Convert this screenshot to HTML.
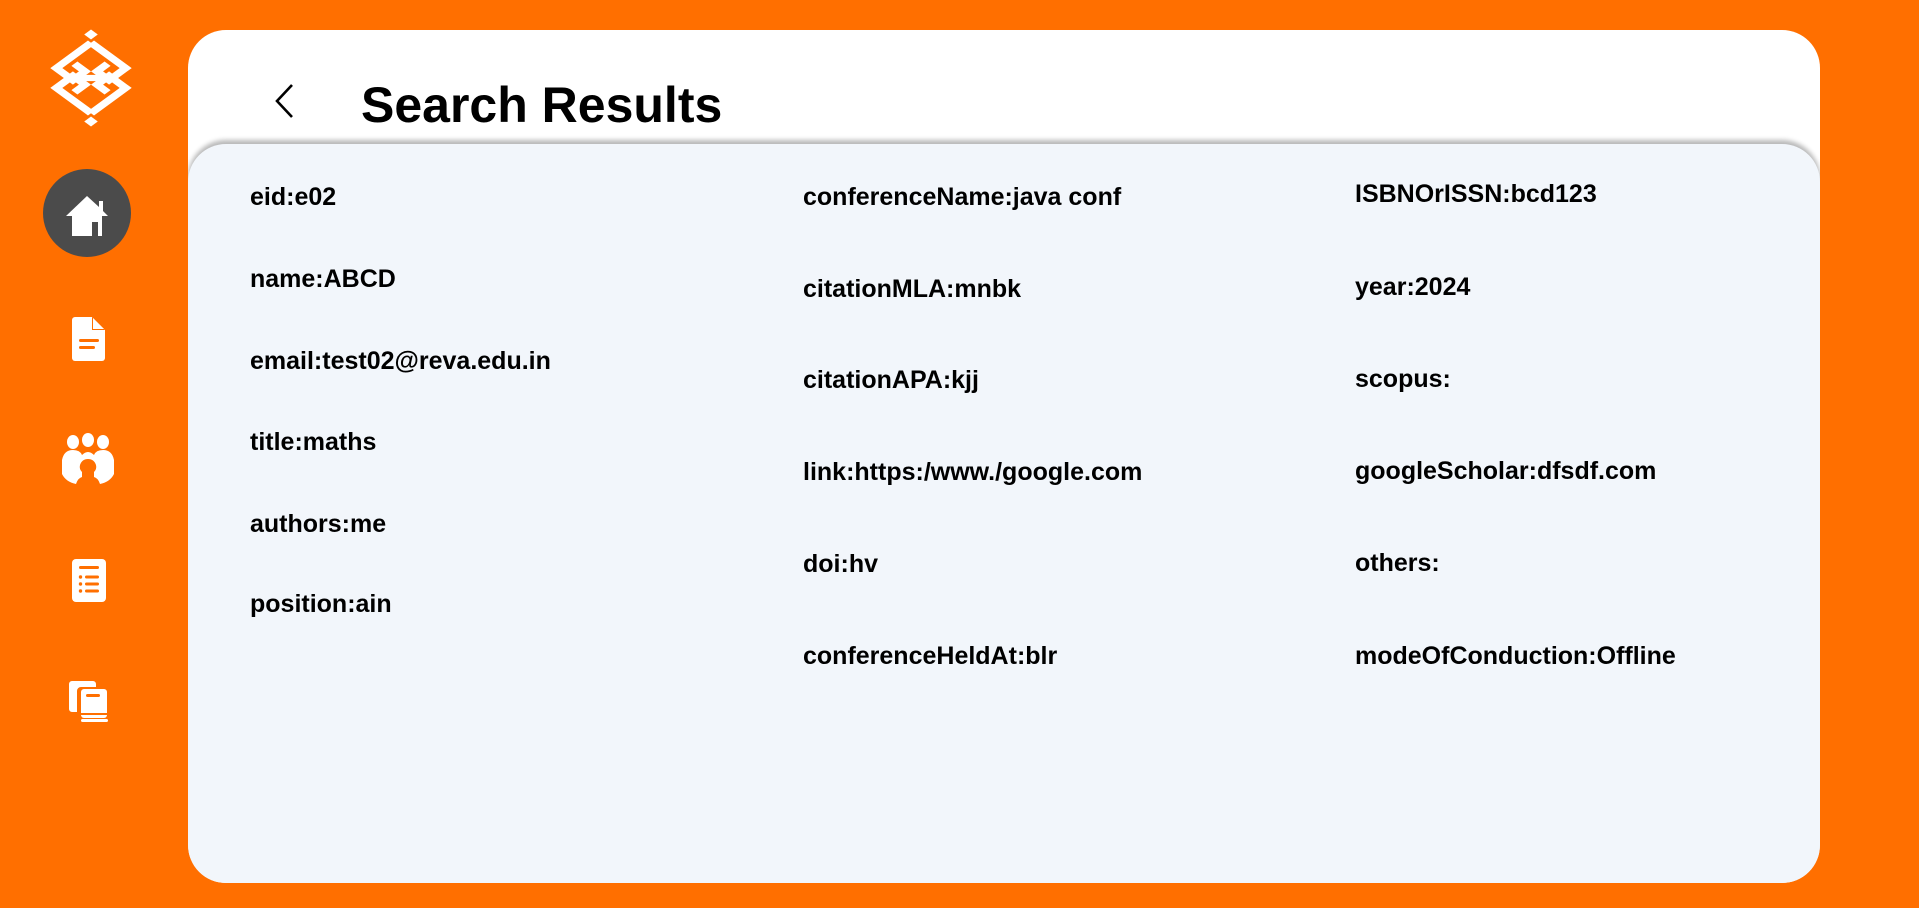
<!DOCTYPE html>
<html><head><meta charset="utf-8">
<style>
*{margin:0;padding:0;box-sizing:border-box}
html,body{width:1919px;height:908px;overflow:hidden;background:#FF6F00;font-family:"Liberation Sans",Arial,sans-serif}
.card{position:absolute;left:188px;top:30px;width:1632px;height:853px;background:#fff;border-radius:38px;overflow:hidden}
.panel{position:absolute;left:0;top:114px;width:1632px;height:739px;background:#F2F6FB;border-radius:38px 38px 0 0;box-shadow:0 -4px 5px rgba(0,0,0,.28)}
.title{position:absolute;left:173px;top:46px;font-size:50px;font-weight:bold;color:#000}
.t{position:absolute;font-size:25px;font-weight:bold;color:#000;white-space:nowrap;line-height:1}
svg{position:absolute}
</style></head><body>
<svg style="left:11px;top:-2px" width="160" height="160" viewBox="0 0 160 160">
 <g transform="translate(80 80) scale(1.3 0.95) rotate(45) scale(0.82) translate(-50 -50)" fill="none" stroke="#fff" stroke-width="8" stroke-linecap="square">
  <rect x="6" y="6" width="9" height="9" fill="#fff" stroke="none"/>
  <rect x="85" y="85" width="9" height="9" fill="#fff" stroke="none"/>
  <path d="M22 18 H64 V40 H48 V30"/>
  <path d="M18 22 V64 H40 V48 H30"/>
  <path d="M78 82 H36 V60 H52 V70"/>
  <path d="M82 78 V36 H60 V52 H70"/>
  <path d="M44 56 L56 44"/>
 </g>
</svg>
<svg style="left:43px;top:169px" width="88" height="88"><circle cx="44" cy="44" r="44" fill="#4B4B4B"/>
 <path d="M44 27 L23 47 H29 V67 H59 V47 H65 L60 42 V32 H56 V38 Z" fill="#fff"/>
 <rect x="49" y="53" width="6" height="14" fill="#4B4B4B"/></svg>
<svg style="left:72px;top:317px" width="34" height="44" viewBox="0 0 34 44">
 <path d="M3 0 H20 L33 13 V41 a3 3 0 0 1 -3 3 H3 a3 3 0 0 1 -3 -3 V3 a3 3 0 0 1 3 -3 Z" fill="#fff"/>
 <path d="M20 0 V13 H33" fill="#FF6F00"/><path d="M21 1 V12 H32 Z" fill="#fff"/>
 <rect x="7" y="22" width="20" height="3" rx="1.5" fill="#FF6F00"/><rect x="7" y="29" width="16" height="3" rx="1.5" fill="#FF6F00"/></svg>
<svg style="left:62px;top:432px" width="52" height="54" viewBox="0 0 52 54" fill="#fff">
 <ellipse cx="11" cy="10" rx="6" ry="7"/><ellipse cx="26" cy="8" rx="6" ry="7"/><ellipse cx="41" cy="10" rx="6" ry="7"/>
 <path d="M0 28 Q2 18 11 18 Q18 18 20 23 Q26 17 32 23 Q34 18 41 18 Q50 18 52 28 V42 Q48 50 38 52 Q36 46 32 45 V40 Q35 37 34 33 Q32 27 26 27 Q20 27 18 33 Q17 37 20 40 V45 Q16 46 14 52 Q4 50 0 42 Z"/>
</svg>
<svg style="left:72px;top:559px" width="34" height="43" viewBox="0 0 34 43">
 <rect width="34" height="43" rx="4" fill="#fff"/>
 <rect x="7" y="7" width="20" height="3" rx="1.5" fill="#FF6F00"/>
 <circle cx="8.5" cy="18" r="1.7" fill="#FF6F00"/><rect x="13" y="16.5" width="14" height="3" rx="1.5" fill="#FF6F00"/>
 <circle cx="8.5" cy="25" r="1.7" fill="#FF6F00"/><rect x="13" y="23.5" width="14" height="3" rx="1.5" fill="#FF6F00"/>
 <circle cx="8.5" cy="32" r="1.7" fill="#FF6F00"/><rect x="13" y="30.5" width="14" height="3" rx="1.5" fill="#FF6F00"/></svg>
<svg style="left:69px;top:681px" width="40" height="41" viewBox="0 0 40 41">
 <path d="M3 0 H24 a3 3 0 0 1 3 3 V6 H12 a4 4 0 0 0 -4 4 V31 H3 a3 3 0 0 1 -3 -3 V3 a3 3 0 0 1 3 -3Z" fill="#fff"/>
 <rect x="12" y="8" width="26" height="29" rx="3" fill="#fff"/>
 <rect x="17" y="13" width="14" height="3" rx="1.5" fill="#FF6F00"/>
 <rect x="12" y="32" width="26" height="2" fill="#FF6F00"/>
 <rect x="12" y="38" width="27" height="3" rx="1.5" fill="#fff"/></svg>
<div class="card">
 <svg style="left:84px;top:52px" width="24" height="38"><path d="M20 3 L5 19 L20 35" fill="none" stroke="#000" stroke-width="2.6"/></svg>
 <div class="title">Search Results</div>
 <div class="panel"></div>
</div>
<div class="t" style="left:250px;top:185px">eid:e02</div>
<div class="t" style="left:250px;top:267px">name:ABCD</div>
<div class="t" style="left:250px;top:349px">email:test02@reva.edu.in</div>
<div class="t" style="left:250px;top:430px">title:maths</div>
<div class="t" style="left:250px;top:512px">authors:me</div>
<div class="t" style="left:250px;top:592px">position:ain</div>
<div class="t" style="left:803px;top:185px">conferenceName:java conf</div>
<div class="t" style="left:803px;top:277px">citationMLA:mnbk</div>
<div class="t" style="left:803px;top:368px">citationAPA:kjj</div>
<div class="t" style="left:803px;top:460px">link:https:/www./google.com</div>
<div class="t" style="left:803px;top:552px">doi:hv</div>
<div class="t" style="left:803px;top:644px">conferenceHeldAt:blr</div>
<div class="t" style="left:1355px;top:182px">ISBNOrISSN:bcd123</div>
<div class="t" style="left:1355px;top:275px">year:2024</div>
<div class="t" style="left:1355px;top:367px">scopus:</div>
<div class="t" style="left:1355px;top:459px">googleScholar:dfsdf.com</div>
<div class="t" style="left:1355px;top:551px">others:</div>
<div class="t" style="left:1355px;top:644px">modeOfConduction:Offline</div>
</body></html>
